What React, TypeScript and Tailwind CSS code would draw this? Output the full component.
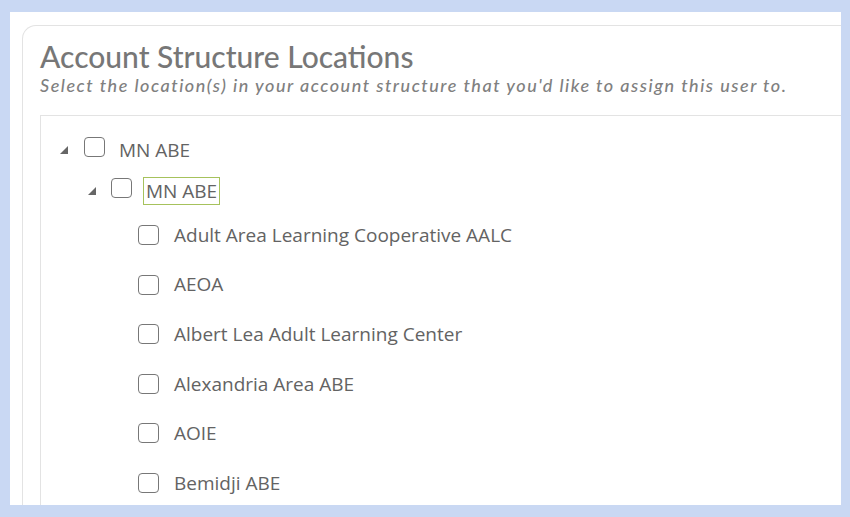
import React from "react";

const Box = () => (
  <span className="inline-block w-[21px] h-[20px] rounded-[4px] border-[1.5px] border-[#777] bg-white shrink-0" />
);

const Tri = () => (
  <svg width="8" height="8" viewBox="0 0 8 8" className="shrink-0">
    <polygon points="8,0 8,8 0,8" fill="#666" />
  </svg>
);

const leaves = [
  "Adult Area Learning Cooperative AALC",
  "AEOA",
  "Albert Lea Adult Learning Center",
  "Alexandria Area ABE",
  "AOIE",
  "Bemidji ABE",
];

export default function App() {
  return (
    <div className="w-[850px] h-[517px] bg-[#c9d8f3] pt-[12px] pl-[10px] pr-[9px] pb-[12px] overflow-hidden">
      <div className="h-full bg-white pt-[13px] pl-[12px] overflow-hidden">
        <div className="w-[900px] h-[600px] border-l border-t border-[#e3e3e3] rounded-tl-[14px] pl-[17px] pt-[12px]">
          <div className="font-['Lato',sans-serif] font-medium text-[30px] leading-[36px] text-[#777]">
            Account Structure Locations
          </div>
          <div className="font-['Lato',sans-serif] font-medium italic text-[18px] leading-[22px] text-[#808080] tracking-[1.5px]">
            Select the location(s) in your account structure that you'd like to assign this user to.
          </div>
          <div className="mt-[19px] border-l border-t border-[#e3e3e3] h-[500px] pt-[22px] font-['Open_Sans',sans-serif] text-[#636363] text-[19px]">
            <div className="flex items-center h-[24px] pl-[19px]">
              <Tri />
              <span className="ml-[16px]"><Box /></span>
              <span className="ml-[14px]">MN ABE</span>
            </div>
            <div className="flex items-center h-[28px] pl-[47px] mt-[15px]">
              <Tri />
              <span className="ml-[15px]"><Box /></span>
              <span className="ml-[11px] border border-[#a6c25c] px-[2px] leading-[26px]">MN ABE</span>
            </div>
            {leaves.map((l, i) => (
              <div key={i} className={`flex items-center h-[24px] pl-[97px] ${i === 0 ? "mt-[18px]" : "mt-[25.6px]"}`}>
                <Box />
                <span className="ml-[15px]">{l}</span>
              </div>
            ))}
          </div>
        </div>
      </div>
    </div>
  );
}
